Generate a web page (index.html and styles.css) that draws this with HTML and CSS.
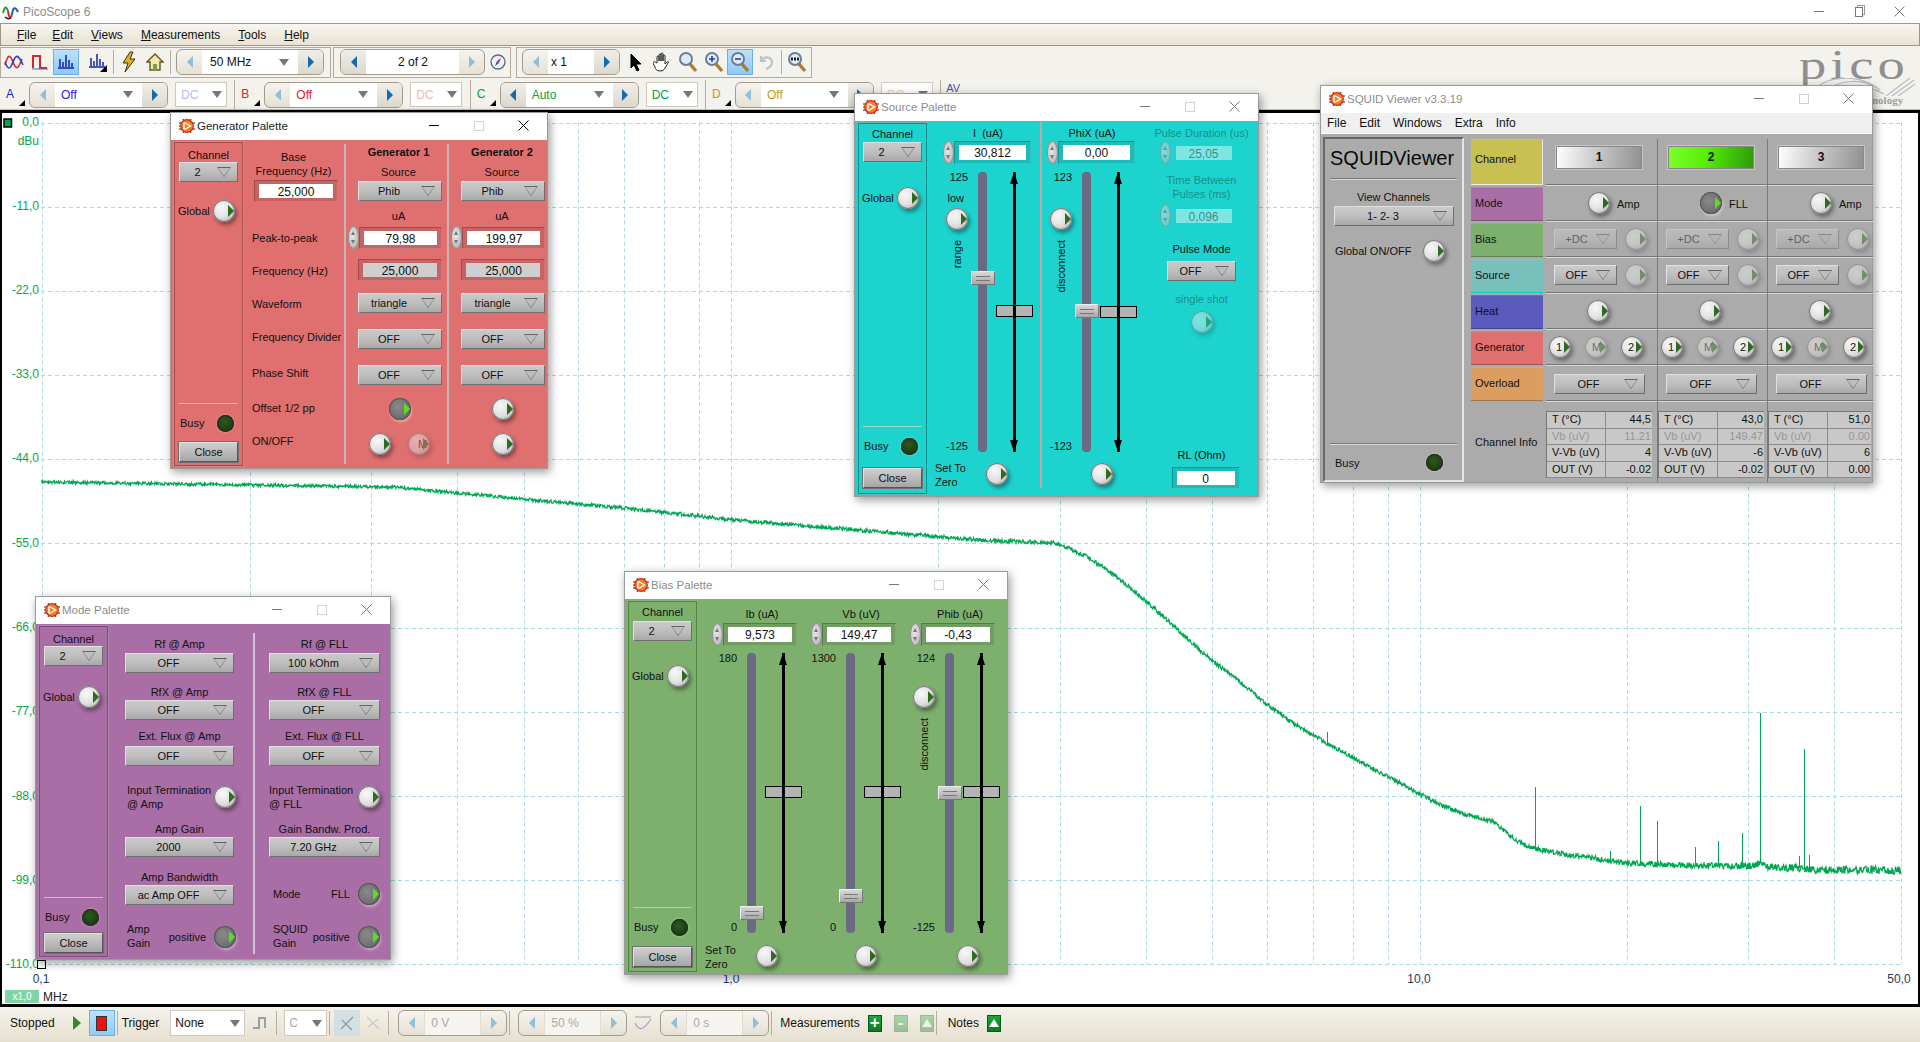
FILE: index.html
```html
<!DOCTYPE html>
<html lang="en">
<head>
    <meta charset="UTF-8">
    <title>PicoScope 6</title>
    <link rel="stylesheet" href="styles.css">
</head>
<body>
<svg class="defs" width="0" height="0">
    <symbol id="lv" viewBox="0 0 16 16">
        <path d="M0 5h3M0 8h3M0 11h3M13 5h3M13 11h3M4 1l1 2M12 1l-1 2M4 15l1-2M12 15l-1-2" stroke="#222" stroke-width="1"/>
        <circle cx="8" cy="8" r="6.3" fill="#f57f20" stroke="#d8261c" stroke-width="1.2"/>
        <path d="M5 4.5v7M5.5 4.5l6 3.5-6 3.5" fill="none" stroke="#fff" stroke-width="1.4"/>
    </symbol>
    <symbol id="x" viewBox="0 0 11 11">
        <path d="M.5.5l10 10M10.5.5l-10 10" stroke="currentColor" stroke-width="1" fill="none"/>
    </symbol>
    <symbol id="mag" viewBox="0 0 20 22">
        <path d="M12 13l6 7" stroke="#b07a30" stroke-width="3.4"/>
        <circle cx="8" cy="8" r="6" fill="#dcebf6" stroke="#6c7f92" stroke-width="2"/>
    </symbol>
</svg>

<header class="titlebar">
    <svg class="app-icon" width="17" height="16" viewBox="0 0 17 16">
        <path d="M1 9c2-7 3-7 5-2" stroke="#2a9a3a" stroke-width="2" fill="none"/>
        <path d="M6 7c1 7 2 8 4 4" stroke="#d8262c" stroke-width="2" fill="none"/>
        <path d="M10 11c1-8 3-9 6-3" stroke="#2a5ac0" stroke-width="2" fill="none"/>
        <path d="M3 13c2 2 4 2 6 1" stroke="#222" stroke-width="1.5" fill="none"/>
    </svg>
    <span class="app-title">PicoScope 6</span>
    <div class="title-btns">
        <span class="wb"><i class="wb-min"></i></span>
        <span class="wb"><i class="wb-restore"></i></span>
        <span class="wb"><svg width="11" height="11"><use href="#x"/></svg></span>
    </div>
</header>

<nav class="menubar">
    <span><u>F</u>ile</span>
    <span><u>E</u>dit</span>
    <span><u>V</u>iews</span>
    <span><u>M</u>easurements</span>
    <span><u>T</u>ools</span>
    <span><u>H</u>elp</span>
</nav>

<div class="toolbar tb-one">
    <div class="tb-group g1">
        <button class="tool"><svg width="20" height="18" viewBox="0 0 20 18"><path d="M1 12C4 1 6 1 9 9s5 8 9-3" stroke="#d8262c" stroke-width="1.6" fill="none"/><path d="M1 9c3 8 5 8 8 0s5-8 10 3" stroke="#2a40c8" stroke-width="1.6" fill="none"/></svg></button>
        <button class="tool"><svg width="18" height="18" viewBox="0 0 18 18"><path d="M2 15V3h7v12h7" stroke="#d8262c" stroke-width="2" fill="none"/><path d="M1 16h16" stroke="#3a70b0"/></svg></button>
        <button class="tool sel"><svg width="18" height="18" viewBox="0 0 18 18"><path d="M3 14V6M6 14V9M9 14V2M12 14V7M15 14V10M1 15h16" stroke="#1020b0" stroke-width="1.5"/></svg></button>
        <button class="tool tool-gap"><svg width="20" height="20" viewBox="0 0 20 20"><path d="M3 14V6M6 14V9M9 14V2M12 14V7M15 14V10M1 15h16" stroke="#1020b0" stroke-width="1.5"/><path d="M19 13v7h-7z"/></svg></button>
        <i class="tb-sep"></i>
        <button class="tool"><svg width="16" height="22" viewBox="0 0 16 22"><path d="M9 1L2 12h5l-3 9 10-13H9l3-7z" fill="#e0b020" stroke="#3a3010"/></svg></button>
        <button class="tool"><svg width="18" height="20" viewBox="0 0 18 20"><path d="M9 2L1 10h3v8h10v-8h3z" fill="#f4e8b0" stroke="#6a5020" stroke-width="1.4"/><path d="M7 12h4v6H7z" fill="#7aa040"/></svg></button>
        <i class="tb-sep"></i>
        <div class="spin-box sb-wide">
            <span class="arr"><i class="tri-l dim"></i></span>
            <span class="sb-field"><span class="sb-text">50 MHz</span><i class="combo-tri"></i></span>
            <span class="arr gray"><i class="tri-r"></i></span>
        </div>
    </div>
    <div class="tb-group g2">
        <div class="spin-box sb-page">
            <span class="arr gray"><i class="tri-l"></i></span>
            <span class="sb-field center"><span class="sb-text">2 of 2</span></span>
            <span class="arr"><i class="tri-r dim"></i></span>
        </div>
        <button class="tool"><svg width="16" height="16" viewBox="0 0 16 16"><circle cx="8" cy="8" r="7" fill="#eef3f8" stroke="#5a6a80" stroke-width="1.3"/><path d="M11 4L9 9 7 7z" fill="#d8262c"/><path d="M5 12l2-5 2 2z" fill="#2a50b0"/></svg></button>
    </div>
    <div class="tb-group g3">
        <div class="spin-box sb-zoom">
            <span class="arr"><i class="tri-l dim"></i></span>
            <span class="sb-field"><span class="sb-text">x 1</span></span>
            <span class="arr gray"><i class="tri-r"></i></span>
        </div>
        <button class="tool"><svg width="14" height="20" viewBox="0 0 14 20"><path d="M2 2v14l3-3 3 6 2-1-3-6h5z" stroke="#000"/></svg></button>
        <button class="tool"><svg width="18" height="20" viewBox="0 0 18 20"><path d="M4 11V5a1 1 0 012 0v4-6a1 1 0 012 0v6-7a1 1 0 012 0v7-5a1 1 0 012 0v8l2-2c1-1 2 0 1 1l-3 5c-1 2-2 3-5 3-3 0-5-2-5-4l-2-4c0-1 1-2 2-1z" fill="#fff" stroke="#111" stroke-width=".9"/></svg></button>
        <button class="tool"><svg width="20" height="22"><use href="#mag"/></svg></button>
        <button class="tool"><svg width="20" height="22" viewBox="0 0 20 22"><use href="#mag" width="20" height="22"/><path d="M5 8h6M8 5v6" stroke="#2040a0" stroke-width="1.6"/></svg></button>
        <button class="tool sel"><svg width="20" height="22" viewBox="0 0 20 22"><use href="#mag" width="20" height="22"/><path d="M5 8h6" stroke="#2040a0" stroke-width="1.6"/></svg></button>
        <button class="tool off"><svg width="18" height="18" viewBox="0 0 18 18"><path d="M4 8c3-5 10-5 11 1 0 4-3 6-6 7M4 3v5h5" stroke="#7a8a98" stroke-width="2.2" fill="none"/></svg></button>
        <i class="tb-sep"></i>
        <button class="tool"><svg width="20" height="22" viewBox="0 0 20 22"><use href="#mag" width="20" height="22"/><path d="M4 8h8" stroke="#222" stroke-width="3" stroke-dasharray="2 1"/></svg></button>
    </div>
</div>

<div class="toolbar tb-two">
    <div class="ch-group">
        <span class="ch-label c-a">A</span>
        <div class="spin-box sb-ch">
            <span class="arr"><i class="tri-l dim"></i></span>
            <span class="sb-field"><span class="sb-text c-a">Off</span><i class="combo-tri"></i></span>
            <span class="arr gray"><i class="tri-r"></i></span>
        </div>
        <div class="cpl off-a"><span>DC</span><i class="combo-tri"></i></div>
    </div>
    <div class="ch-group">
        <span class="ch-label c-b">B</span>
        <div class="spin-box sb-ch">
            <span class="arr"><i class="tri-l dim"></i></span>
            <span class="sb-field"><span class="sb-text c-b">Off</span><i class="combo-tri"></i></span>
            <span class="arr gray"><i class="tri-r"></i></span>
        </div>
        <div class="cpl off-b"><span>DC</span><i class="combo-tri"></i></div>
    </div>
    <div class="ch-group">
        <span class="ch-label c-c">C</span>
        <div class="spin-box sb-ch">
            <span class="arr gray"><i class="tri-l"></i></span>
            <span class="sb-field"><span class="sb-text c-c">Auto</span><i class="combo-tri"></i></span>
            <span class="arr gray"><i class="tri-r"></i></span>
        </div>
        <div class="cpl c-c"><span>DC</span><i class="combo-tri"></i></div>
    </div>
    <div class="ch-group">
        <span class="ch-label c-d">D</span>
        <div class="spin-box sb-ch">
            <span class="arr"><i class="tri-l dim"></i></span>
            <span class="sb-field"><span class="sb-text c-d">Off</span><i class="combo-tri"></i></span>
            <span class="arr gray"><i class="tri-r"></i></span>
        </div>
        <div class="cpl off-d"><span>DC</span><i class="combo-tri"></i></div>
    </div>
    <span class="ch-av">AV</span>
</div>

<div class="pico-logo">
    <span class="pico-word">pico</span>
    <svg class="pico-wave" width="101" height="18" viewBox="0 0 101 18">
        <path d="M0 12C15-4 45-2 60 8M8 16C25 0 50 0 66 12M20 18C36 6 52 6 70 16M72 18L96 0M78 18L100 2M84 18L101 6" stroke="#b4bcc6" stroke-width="1.2" fill="none"/>
    </svg>
    <span class="pico-sub">nology</span>
</div>

<main class="plot">
    <svg id="plotSvg" class="plot-svg" viewBox="0 110 1920 897">
        <g id="gridLines"></g>
        <g id="traceLayer"></g>
        <g class="ylabels">
            <text x="39" y="126">0,0</text>
            <text x="39" y="145">dBu</text>
            <text x="39" y="210">-11,0</text>
            <text x="39" y="294">-22,0</text>
            <text x="39" y="378">-33,0</text>
            <text x="39" y="462">-44,0</text>
            <text x="39" y="547">-55,0</text>
            <text x="39" y="631">-66,0</text>
            <text x="39" y="715">-77,0</text>
            <text x="39" y="800">-88,0</text>
            <text x="39" y="884">-99,0</text>
            <text x="39" y="968">-110,0</text>
        </g>
        <g class="xlabels">
            <text x="41" y="983">0,1</text>
            <text x="731" y="983">1,0</text>
            <text x="1419" y="983">10,0</text>
            <text x="1899" y="983">50,0</text>
        </g>
        <rect x="5" y="990" width="34" height="13" fill="#7fd4a8"/>
        <text class="xbadge" x="22" y="1000">x1,0</text>
        <text class="xunit" x="43" y="1001">MHz</text>
        <rect x="4" y="119" width="7.500" height="8" fill="#00a651" stroke="#000" stroke-width="1.500"/>
        <rect x="37.500" y="960.500" width="8" height="8" fill="#fff" stroke="#000"/>
    </svg>
</main>

<footer class="statusbar">
    <span class="st-text st-stopped">Stopped</span>
    <i class="st-play"></i>
    <button class="tool sel st-stop"><i></i></button>
    <i class="tb-sep"></i>
    <span class="st-text st-trigger">Trigger</span>
    <div class="st-combo st-none"><span>None</span><i class="combo-tri"></i></div>
    <svg class="st-edge" width="18" height="20" viewBox="0 0 18 20"><path d="M1 15h6V5h6v10" stroke="#9aa0a0" stroke-width="2" fill="none"/></svg>
    <i class="tb-sep"></i>
    <div class="st-combo st-c off"><span>C</span><i class="combo-tri"></i></div>
    <i class="tb-sep"></i>
    <button class="tool st-flat"><svg width="16" height="18" viewBox="0 0 16 18"><path d="M2 15L14 3M3 6l5 5 5 5" stroke="#8a9cb0" stroke-width="1.3" fill="none"/></svg></button>
    <button class="tool off"><svg width="16" height="18" viewBox="0 0 16 18"><path d="M2 3l12 12M3 13L13 5" stroke="#9aa6b0" stroke-width="1.3" fill="none"/></svg></button>
    <i class="tb-sep"></i>
    <div class="spin-box sb-st off st-first"><span class="arr"><i class="tri-l dim"></i></span><span class="sb-field"><span class="sb-text">0 V</span></span><span class="arr"><i class="tri-r dim"></i></span></div>
    <i class="tb-sep"></i>
    <div class="spin-box sb-st off"><span class="arr"><i class="tri-l dim"></i></span><span class="sb-field"><span class="sb-text">50 %</span></span><span class="arr"><i class="tri-r dim"></i></span></div>
    <svg class="st-edge2" width="18" height="20" viewBox="0 0 18 20"><path d="M1 4h16M1 10c4 8 8 8 16-4" stroke="#a49ac8" stroke-width="1.2" fill="none"/></svg>
    <div class="spin-box sb-st off"><span class="arr"><i class="tri-l dim"></i></span><span class="sb-field"><span class="sb-text">0 s</span></span><span class="arr"><i class="tri-r dim"></i></span></div>
    <i class="tb-sep"></i>
    <span class="st-text st-meas">Measurements</span>
    <span class="gbtn">+</span>
    <span class="gbtn off">-</span>
    <span class="gbtn off"><i class="gtri"></i></span>
    <i class="tb-sep"></i>
    <span class="st-text st-notes">Notes</span>
    <span class="gbtn"><i class="gtri"></i></span>
</footer>

<!-- generator palette -->
<section class="win win-gen active">
    <div class="win-title">
        <svg width="16" height="16"><use href="#lv"/></svg>
        <span>Generator Palette</span>
        <div class="title-btns"><span class="wb"><i class="wb-min"></i></span><span class="wb"><i class="wb-max"></i></span><span class="wb"><svg width="11" height="11"><use href="#x"/></svg></span></div>
    </div>
    <div class="win-body">
        <aside class="side">
            <div class="lbl">Channel</div>
            <div class="drop"><span>2</span></div>
            <div class="side-row global"><span class="lbl">Global</span><i class="ring"></i></div>
            <hr class="side-sep">
            <div class="side-row busy"><span class="lbl">Busy</span><i class="led"></i></div>
            <div class="close-btn">Close</div>
        </aside>
        <div class="gen-labels">
            <div class="lbl gen-base">Base<br>Frequency (Hz)</div>
            <div class="num gen-base-num"><b>25,000</b></div>
            <div class="lbl">Peak-to-peak</div>
            <div class="lbl">Frequency (Hz)</div>
            <div class="lbl">Waveform</div>
            <div class="lbl">Frequency Divider</div>
            <div class="lbl">Phase Shift</div>
            <div class="lbl">Offset 1/2 pp</div>
            <div class="lbl">ON/OFF</div>
        </div>
        <div class="gen-col">
            <div class="lbl bold">Generator 1</div>
            <div class="lbl">Source</div>
            <div class="drop"><span>Phib</span></div>
            <div class="lbl">uA</div>
            <div class="numrow"><i class="spin"></i><div class="num"><b>79,98</b></div></div>
            <div class="num gray"><b>25,000</b></div>
            <div class="drop"><span>triangle</span></div>
            <div class="drop"><span>OFF</span></div>
            <div class="drop"><span>OFF</span></div>
            <div class="gen-rings"><i class="ring lit"></i></div>
            <div class="gen-rings two"><i class="ring"></i><i class="ring dim txt">M</i></div>
        </div>
        <div class="gen-col">
            <div class="lbl bold">Generator 2</div>
            <div class="lbl">Source</div>
            <div class="drop"><span>Phib</span></div>
            <div class="lbl">uA</div>
            <div class="numrow"><i class="spin"></i><div class="num"><b>199,97</b></div></div>
            <div class="num gray"><b>25,000</b></div>
            <div class="drop"><span>triangle</span></div>
            <div class="drop"><span>OFF</span></div>
            <div class="drop"><span>OFF</span></div>
            <div class="gen-rings"><i class="ring"></i></div>
            <div class="gen-rings"><i class="ring"></i></div>
        </div>
    </div>
</section>

<!-- source palette -->
<section class="win win-src">
    <div class="win-title">
        <svg width="16" height="16"><use href="#lv"/></svg>
        <span>Source Palette</span>
        <div class="title-btns"><span class="wb"><i class="wb-min"></i></span><span class="wb"><i class="wb-max"></i></span><span class="wb"><svg width="11" height="11"><use href="#x"/></svg></span></div>
    </div>
    <div class="win-body">
        <aside class="side">
            <div class="lbl">Channel</div>
            <div class="drop"><span>2</span></div>
            <div class="side-row global"><span class="lbl">Global</span><i class="ring"></i></div>
            <hr class="side-sep">
            <div class="side-row busy"><span class="lbl">Busy</span><i class="led"></i></div>
            <div class="close-btn">Close</div>
        </aside>
        <div class="sl sl-first">
            <div class="lbl sl-head">I&nbsp; (uA)</div>
            <div class="numrow sl-num"><i class="spin"></i><div class="num"><b>30,812</b></div></div>
            <div class="sl-area">
                <div class="sl-labels">
                    <span class="lbl">125</span>
                    <span class="lbl sl-low">low</span>
                    <i class="ring sl-ring"></i>
                    <span class="lbl vert sl-vert">range</span>
                    <span class="lbl sl-end">-125</span>
                </div>
                <div class="sl-track"><i class="sl-thumb" style="top:99px"></i></div>
                <div class="sl-arrow"><i class="sl-mark" style="top:133px"></i></div>
            </div>
            <div class="sl-foot"><span class="lbl sl-zero">Set To<br>Zero</span><i class="ring"></i></div>
        </div>
        <div class="sl sl-narrow">
            <div class="lbl sl-head">PhiX (uA)</div>
            <div class="numrow sl-num"><i class="spin"></i><div class="num"><b>0,00</b></div></div>
            <div class="sl-area">
                <div class="sl-labels">
                    <span class="lbl">123</span>
                    <i class="ring sl-ring-far"></i>
                    <span class="lbl vert sl-vert">disconnect</span>
                    <span class="lbl sl-end">-123</span>
                </div>
                <div class="sl-track"><i class="sl-thumb" style="top:132px"></i></div>
                <div class="sl-arrow"><i class="sl-mark" style="top:134px"></i></div>
            </div>
            <div class="sl-foot"><i class="ring"></i></div>
        </div>
        <div class="pulse-col">
            <div class="lbl dim-text">Pulse Duration (us)</div>
            <div class="numrow faded"><i class="spin"></i><div class="num pale"><b>25,05</b></div></div>
            <div class="lbl dim-text">Time Between<br>Pulses (ms)</div>
            <div class="numrow faded"><i class="spin"></i><div class="num pale"><b>0,096</b></div></div>
            <div class="lbl">Pulse Mode</div>
            <div class="drop pulse-drop"><span>OFF</span></div>
            <div class="lbl dim-text">single shot</div>
            <i class="ring dim"></i>
            <div class="lbl">RL (Ohm)</div>
            <div class="num rl-num"><b>0</b></div>
        </div>
    </div>
</section>

<!-- squid viewer -->
<section class="win win-sq">
    <div class="win-title">
        <svg width="16" height="16"><use href="#lv"/></svg>
        <span>SQUID Viewer v3.3.19</span>
        <div class="title-btns"><span class="wb"><i class="wb-min"></i></span><span class="wb"><i class="wb-max"></i></span><span class="wb"><svg width="11" height="11"><use href="#x"/></svg></span></div>
    </div>
    <nav class="sq-menu"><span>File</span><span>Edit</span><span>Windows</span><span>Extra</span><span>Info</span></nav>
    <div class="sq-body">
        <aside class="sq-side">
            <h1 class="sq-name">SQUIDViewer</h1>
            <hr class="sq-sep">
            <div class="lbl sq-view">View Channels</div>
            <div class="drop sq-drop"><span>1- 2- 3</span></div>
            <div class="sq-row"><span class="lbl">Global ON/OFF</span><i class="ring"></i></div>
            <hr class="sq-sep sq-sep-low">
            <div class="sq-row sq-busy"><span class="lbl">Busy</span><i class="led"></i></div>
        </aside>
        <div class="sq-grid">
            <div class="tile t-chan">Channel</div>
            <div class="cell c-chan"><div class="chan-btn">1</div></div>
            <div class="cell c-chan"><div class="chan-btn green">2</div></div>
            <div class="cell c-chan"><div class="chan-btn">3</div></div>

            <div class="tile t-mode">Mode</div>
            <div class="cell c-mode"><i class="ring"></i><span class="lbl">Amp</span></div>
            <div class="cell c-mode"><i class="ring lit"></i><span class="lbl">FLL</span></div>
            <div class="cell c-mode"><i class="ring"></i><span class="lbl">Amp</span></div>

            <div class="tile t-bias">Bias</div>
            <div class="cell c-opt"><div class="drop faded"><span>+DC</span></div><i class="ring dim"></i></div>
            <div class="cell c-opt"><div class="drop faded"><span>+DC</span></div><i class="ring dim"></i></div>
            <div class="cell c-opt"><div class="drop faded"><span>+DC</span></div><i class="ring dim"></i></div>

            <div class="tile t-src">Source</div>
            <div class="cell c-opt"><div class="drop"><span>OFF</span></div><i class="ring dim"></i></div>
            <div class="cell c-opt"><div class="drop"><span>OFF</span></div><i class="ring dim"></i></div>
            <div class="cell c-opt"><div class="drop"><span>OFF</span></div><i class="ring dim"></i></div>

            <div class="tile t-heat">Heat</div>
            <div class="cell c-heat"><i class="ring"></i></div>
            <div class="cell c-heat"><i class="ring"></i></div>
            <div class="cell c-heat"><i class="ring"></i></div>

            <div class="tile t-gen">Generator</div>
            <div class="cell c-gen"><i class="ring txt">1</i><i class="ring dim txt">M</i><i class="ring txt">2</i></div>
            <div class="cell c-gen"><i class="ring txt">1</i><i class="ring dim txt">M</i><i class="ring txt">2</i></div>
            <div class="cell c-gen"><i class="ring txt">1</i><i class="ring dim txt">M</i><i class="ring txt">2</i></div>

            <div class="tile t-over">Overload</div>
            <div class="cell c-over"><div class="drop"><span>OFF</span></div></div>
            <div class="cell c-over"><div class="drop"><span>OFF</span></div></div>
            <div class="cell c-over"><div class="drop"><span>OFF</span></div></div>

            <div class="tile t-info">Channel Info</div>
            <div class="cell c-info">
                <table class="info">
                    <tr><td>T (°C)</td><td>44,5</td></tr>
                    <tr class="dim-row"><td>Vb (uV)</td><td>11.21</td></tr>
                    <tr><td>V-Vb (uV)</td><td>4</td></tr>
                    <tr><td>OUT (V)</td><td>-0.02</td></tr>
                </table>
            </div>
            <div class="cell c-info">
                <table class="info">
                    <tr><td>T (°C)</td><td>43,0</td></tr>
                    <tr class="dim-row"><td>Vb (uV)</td><td>149.47</td></tr>
                    <tr><td>V-Vb (uV)</td><td>-6</td></tr>
                    <tr><td>OUT (V)</td><td>-0.02</td></tr>
                </table>
            </div>
            <div class="cell c-info">
                <table class="info">
                    <tr><td>T (°C)</td><td>51,0</td></tr>
                    <tr class="dim-row"><td>Vb (uV)</td><td>0.00</td></tr>
                    <tr><td>V-Vb (uV)</td><td>6</td></tr>
                    <tr><td>OUT (V)</td><td>0.00</td></tr>
                </table>
            </div>
        </div>
    </div>
</section>

<!-- mode palette -->
<section class="win win-mode">
    <div class="win-title">
        <svg width="16" height="16"><use href="#lv"/></svg>
        <span>Mode Palette</span>
        <div class="title-btns"><span class="wb"><i class="wb-min"></i></span><span class="wb"><i class="wb-max"></i></span><span class="wb"><svg width="11" height="11"><use href="#x"/></svg></span></div>
    </div>
    <div class="win-body">
        <aside class="side">
            <div class="lbl">Channel</div>
            <div class="drop"><span>2</span></div>
            <div class="side-row global"><span class="lbl">Global</span><i class="ring"></i></div>
            <hr class="side-sep">
            <div class="side-row busy"><span class="lbl">Busy</span><i class="led"></i></div>
            <div class="close-btn">Close</div>
        </aside>
        <div class="mode-col mode-a">
            <div class="lbl">Rf @ Amp</div>
            <div class="drop"><span>OFF</span></div>
            <div class="lbl">RfX @ Amp</div>
            <div class="drop"><span>OFF</span></div>
            <div class="lbl">Ext. Flux @ Amp</div>
            <div class="drop"><span>OFF</span></div>
            <div class="mode-row"><span class="lbl">Input Termination<br>@ Amp</span><i class="ring"></i></div>
            <div class="lbl">Amp Gain</div>
            <div class="drop"><span>2000</span></div>
            <div class="lbl">Amp Bandwidth</div>
            <div class="drop"><span>ac Amp OFF</span></div>
            <div class="mode-row mode-foot"><span class="lbl">Amp<br>Gain</span><span class="lbl mode-pos">positive</span><i class="ring lit"></i></div>
        </div>
        <div class="mode-col mode-b">
            <div class="lbl">Rf @ FLL</div>
            <div class="drop"><span>100 kOhm</span></div>
            <div class="lbl">RfX @ FLL</div>
            <div class="drop"><span>OFF</span></div>
            <div class="lbl">Ext. Flux @ FLL</div>
            <div class="drop"><span>OFF</span></div>
            <div class="mode-row"><span class="lbl">Input Termination<br>@ FLL</span><i class="ring"></i></div>
            <div class="lbl">Gain Bandw. Prod.</div>
            <div class="drop"><span>7.20 GHz</span></div>
            <div class="mode-row mode-sw"><span class="lbl">Mode</span><span class="lbl mode-pos">FLL</span><i class="ring lit"></i></div>
            <div class="mode-row mode-foot"><span class="lbl">SQUID<br>Gain</span><span class="lbl mode-pos">positive</span><i class="ring lit"></i></div>
        </div>
    </div>
</section>

<!-- bias palette -->
<section class="win win-bias">
    <div class="win-title">
        <svg width="16" height="16"><use href="#lv"/></svg>
        <span>Bias Palette</span>
        <div class="title-btns"><span class="wb"><i class="wb-min"></i></span><span class="wb"><i class="wb-max"></i></span><span class="wb"><svg width="11" height="11"><use href="#x"/></svg></span></div>
    </div>
    <div class="win-body">
        <aside class="side">
            <div class="lbl">Channel</div>
            <div class="drop"><span>2</span></div>
            <div class="side-row global"><span class="lbl">Global</span><i class="ring"></i></div>
            <hr class="side-sep">
            <div class="side-row busy"><span class="lbl">Busy</span><i class="led"></i></div>
            <div class="close-btn">Close</div>
        </aside>
        <div class="sl">
            <div class="lbl sl-head">Ib (uA)</div>
            <div class="numrow sl-num"><i class="spin"></i><div class="num"><b>9,573</b></div></div>
            <div class="sl-area">
                <div class="sl-labels"><span class="lbl">180</span><span class="lbl sl-end">0</span></div>
                <div class="sl-track"><i class="sl-thumb" style="top:253px"></i></div>
                <div class="sl-arrow"><i class="sl-mark" style="top:133px"></i></div>
            </div>
            <div class="sl-foot"><span class="lbl sl-zero">Set To<br>Zero</span><i class="ring"></i></div>
        </div>
        <div class="sl">
            <div class="lbl sl-head">Vb (uV)</div>
            <div class="numrow sl-num"><i class="spin"></i><div class="num"><b>149,47</b></div></div>
            <div class="sl-area">
                <div class="sl-labels"><span class="lbl">1300</span><span class="lbl sl-end">0</span></div>
                <div class="sl-track"><i class="sl-thumb" style="top:236px"></i></div>
                <div class="sl-arrow"><i class="sl-mark" style="top:133px"></i></div>
            </div>
            <div class="sl-foot"><i class="ring"></i></div>
        </div>
        <div class="sl">
            <div class="lbl sl-head">Phib (uA)</div>
            <div class="numrow sl-num"><i class="spin"></i><div class="num"><b>-0,43</b></div></div>
            <div class="sl-area">
                <div class="sl-labels">
                    <span class="lbl">124</span>
                    <i class="ring sl-ring-mid"></i>
                    <span class="lbl vert sl-vert">disconnect</span>
                    <span class="lbl sl-end">-125</span>
                </div>
                <div class="sl-track"><i class="sl-thumb" style="top:133px"></i></div>
                <div class="sl-arrow"><i class="sl-mark" style="top:133px"></i></div>
            </div>
            <div class="sl-foot sl-foot-far"><i class="ring"></i></div>
        </div>
    </div>
</section>

<script src="script.js"></script>
</body>
</html>
```

FILE: styles.css
```css
* {
    box-sizing: border-box;
}
body {
    margin: 0;
    width: 1920px;
    height: 1042px;
    overflow: hidden;
    display: flex;
    flex-direction: column;
    position: relative;
    background: #fff;
    font-family: "Liberation Sans", Arial, sans-serif;
    font-size: 12px;
    color: #111;
}
.defs {
    position: absolute;
}
button {
    font: inherit;
    padding: 0;
    border: none;
    background: none;
}
i {
    font-style: normal;
}

/* main window chrome */
.titlebar {
    height: 23px;
    flex: none;
    display: flex;
    align-items: center;
    padding-left: 2px;
    background: #fff;
}
.app-title {
    margin-left: 4px;
    color: #8c8c8c;
}
.title-btns {
    margin-left: auto;
    margin-right: 1px;
    display: flex;
}
.wb {
    width: 45px;
    height: 20px;
    display: flex;
    align-items: center;
    justify-content: center;
    color: #777;
}
.wb-min {
    width: 10px;
    height: 1px;
    background: currentColor;
}
.wb-max {
    width: 10px;
    height: 10px;
    border: 1px solid #d2d2d2;
}
.wb-restore {
    width: 8px;
    height: 10px;
    border: 1px solid currentColor;
    box-shadow: 2px -2px 0 -1px #fff, 2px -2px 0 0 #999;
}
.titlebar .wb {
    width: 40px;
}
.menubar {
    height: 23px;
    flex: none;
    display: flex;
    align-items: center;
    padding-left: 16px;
    gap: 15px;
    border: 1px solid #a09686;
    background: linear-gradient(#f8f6f0, #e8e2d2);
}
.menubar u {
    text-underline-offset: 1px;
}
.menubar span:nth-child(2) {
    margin-left: 1px;
}
.menubar span:nth-child(3) {
    margin-left: 3px;
}
.menubar span:nth-child(4) {
    margin-left: 3px;
}
.menubar span:nth-child(5),
.menubar span:nth-child(6) {
    margin-left: 3px;
}

/* toolbars */
.toolbar {
    flex: none;
    display: flex;
    background: #f4f2ed;
}
.tb-one {
    height: 33px;
    padding-top: 1px;
    gap: 2px;
}
.tb-two {
    height: 31px;
    border-top: 1px solid #f4f2ed;
    border-bottom: 1px solid #c9c0ae;
}
.tb-group {
    height: 31px;
    display: flex;
    align-items: center;
    border: 1px solid #b3aa9b;
    padding-bottom: 1px;
}
.g1 {
    width: 331px;
}
.g2 {
    width: 178px;
    padding-left: 6px;
}
.g3 {
    width: 296px;
    margin-left: 3px;
    padding-left: 5px;
}
.tool {
    width: 26px;
    height: 26px;
    flex: none;
    display: flex;
    align-items: center;
    justify-content: center;
}
.tool.sel {
    background: linear-gradient(#bfe2fb, #8ccaf6);
    outline: 1px solid #6cb0e4;
    outline-offset: -1px;
}
.tool.off {
    opacity: 0.45;
}
.tool-gap {
    margin-left: 6px;
}
.tb-sep {
    width: 1px;
    height: 24px;
    flex: none;
    margin: 0 2px;
    background: #b5ac9c;
}
.spin-box {
    height: 26px;
    flex: none;
    display: flex;
    border: 1px solid #a59b8b;
    border-radius: 6px;
    background: linear-gradient(#f5f3ee, #e6e1d5);
    overflow: hidden;
}
.spin-box .arr {
    width: 25px;
    flex: none;
    display: flex;
    align-items: center;
    justify-content: center;
}
.sb-field {
    flex: 1;
    display: flex;
    align-items: center;
    padding: 0 5px 0 6px;
    background: #fff;
}
.sb-field.center {
    justify-content: center;
}
.combo-tri {
    width: 0;
    height: 0;
    margin-left: auto;
    margin-right: 4px;
    border-top: 7px solid #777;
    border-left: 5px solid transparent;
    border-right: 5px solid transparent;
}
.tri-l,
.tri-r {
    width: 0;
    height: 0;
    border-top: 6px solid transparent;
    border-bottom: 6px solid transparent;
}
.tri-l {
    border-right: 6px solid #0f6cb0;
}
.tri-r {
    border-left: 6px solid #0f6cb0;
}
.tri-l.dim {
    border-right-color: #8fbedb;
}
.tri-r.dim {
    border-left-color: #8fbedb;
}
.arr.gray {
    background: linear-gradient(#f0eee9, #dcd8cd);
}
.sb-wide {
    width: 148px;
    margin-left: 3px;
}
.sb-wide .sb-field {
    padding-left: 8px;
}
.sb-page {
    width: 145px;
}
.sb-zoom {
    width: 98px;
    margin-right: 3px;
}
.sb-zoom .sb-field {
    padding-left: 3px;
}
.ch-group {
    width: 235.33px;
    height: 29px;
    display: flex;
    align-items: center;
    padding-left: 6px;
    border-right: 1px solid #b5ac9c;
}
.ch-label {
    width: 23px;
    height: 24px;
    flex: none;
    line-height: 22px;
    position: relative;
}
.ch-label::after {
    content: "";
    position: absolute;
    right: 4px;
    bottom: 1px;
    border-left: 6px solid transparent;
    border-bottom: 6px solid #000;
}
.sb-ch {
    width: 139px;
    height: 26px;
}
.cpl {
    width: 52px;
    height: 25px;
    flex: none;
    margin-left: 7px;
    display: flex;
    align-items: center;
    padding-left: 5px;
    background: #fff;
    border: 1px solid #cfc9bd;
}
.c-a {
    color: #2020e0;
}
.c-b {
    color: #e02020;
}
.c-c {
    color: #00a040;
}
.c-d {
    color: #c09a20;
}
.off-a {
    color: #b8b8ee;
}
.off-b {
    color: #eeb8b8;
}
.off-d {
    color: #e6d8a8;
}
.ch-av {
    margin-left: 5px;
    margin-top: 2px;
    color: #5050a0;
    font-size: 11px;
}

/* logo */
.pico-logo {
    position: absolute;
    left: 1799px;
    top: 42px;
    width: 121px;
    height: 66px;
}
.pico-word {
    display: block;
    width: 84px;
    font-family: "Liberation Serif", serif;
    font-size: 42px;
    line-height: 47px;
    letter-spacing: 3px;
    color: #8f8f8f;
    transform: scaleX(1.3);
    transform-origin: left top;
}
.pico-wave {
    position: absolute;
    left: 15px;
    top: 36px;
}
.pico-sub {
    position: absolute;
    left: 73px;
    top: 52px;
    font-family: "Liberation Serif", serif;
    font-size: 11px;
    font-weight: bold;
    color: #a0a0a0;
}

/* plot */
.plot {
    flex: 1;
    min-height: 0;
    border: 2px solid #000;
    border-top-width: 3px;
    border-bottom-width: 3px;
}
.plot-svg {
    position: absolute;
    left: 0;
    top: 110px;
    width: 1920px;
    height: 897px;
}
.ylabels text {
    font-size: 12px;
    fill: #00a651;
    text-anchor: end;
}
.xlabels text {
    font-size: 12px;
    fill: #1c3a62;
    text-anchor: middle;
}
.xbadge {
    font-size: 10px;
    fill: #fff;
    text-anchor: middle;
}
.xunit {
    font-size: 12px;
    fill: #222;
}

/* status bar */
.statusbar {
    height: 35px;
    flex: none;
    display: flex;
    align-items: center;
    padding-bottom: 3px;
    background: linear-gradient(#f5f2ec, #e6e0cf);
}
.st-text {
    flex: none;
}
.st-stopped {
    margin-left: 10px;
}
.st-play {
    margin-left: 18px;
    width: 0;
    height: 0;
    border-left: 8px solid #2d8a2d;
    border-top: 7px solid transparent;
    border-bottom: 7px solid transparent;
}
.st-stop {
    margin-left: 8px;
}
.st-stop i {
    width: 11px;
    height: 15px;
    background: #f01010;
    border: 1px solid #333;
}
.st-trigger {
    margin-left: 2px;
}
.st-combo {
    height: 26px;
    flex: none;
    display: flex;
    align-items: center;
    padding-left: 4px;
    background: #fff;
    border: 1px solid #cfc9bd;
}
.st-combo.off {
    color: #aaa;
}
.st-none {
    width: 75px;
    margin-left: 11px;
}
.st-c {
    width: 43px;
    margin-left: 5px;
}
.st-edge {
    margin: 0 4px 0 7px;
}
.st-flat {
    background: #d4dfe4;
    margin-left: 2px;
}
.sb-st {
    width: 109px;
    margin-left: 6px;
}
.st-first {
    margin-left: 7px;
}
.st-edge2 + .sb-st {
    margin-left: 1px;
}
.sb-st.off .sb-text {
    color: #aaa;
}
.sb-st.off .sb-field {
    background: #f6f4ef;
    border-left: 1px solid #e0dccf;
    border-right: 1px solid #e0dccf;
}
.st-edge2 {
    margin: 0 7px;
}
.st-meas {
    margin-left: 6px;
}
.gbtn {
    width: 14px;
    height: 17px;
    margin-left: 8px;
    flex: none;
    display: flex;
    align-items: center;
    justify-content: center;
    color: #fff;
    font-size: 17px;
    font-weight: bold;
    background: linear-gradient(#18a83a, #0c7a24);
    border: 1px solid #0a5a1a;
}
.gbtn.off {
    opacity: 0.35;
    margin-left: 12px;
}
.gtri {
    width: 0;
    height: 0;
    border-left: 5px solid transparent;
    border-right: 5px solid transparent;
    border-bottom: 8px solid #fff;
}
.st-notes {
    margin-left: 9px;
}
.statusbar .tb-sep + .st-notes + .gbtn {
    margin-left: 8px;
}

/* palette windows */
.win {
    position: absolute;
    display: flex;
    flex-direction: column;
    border: 1px solid #9a9a9a;
    background: var(--pal);
    box-shadow: 2px 3px 9px rgba(0, 0, 0, 0.4);
}
.win-gen {
    left: 170px;
    top: 112px;
    width: 378px;
    height: 357px;
    --pal: #e06f6f;
    --edge: #a84c4c;
}
.win-src {
    left: 854px;
    top: 93px;
    width: 405px;
    height: 404px;
    --pal: #1dd3ce;
    --edge: #0e8f8c;
}
.win-mode {
    left: 35px;
    top: 596px;
    width: 356px;
    height: 364px;
    --pal: #a96ea6;
    --edge: #7c4a7a;
}
.win-bias {
    left: 624px;
    top: 571px;
    width: 384px;
    height: 404px;
    --pal: #7db06d;
    --edge: #4f8342;
}
.win-sq {
    left: 1320px;
    top: 85px;
    width: 553px;
    height: 398px;
    --pal: #ababab;
}
.win-title {
    height: 27px;
    flex: none;
    display: flex;
    align-items: center;
    padding: 0 0 2px 8px;
    background: #fff;
    color: #8c8c8c;
    font-size: 11.5px;
}
.win-title > span {
    margin-left: 2px;
}
.active .win-title {
    color: #222;
}
.active .wb {
    color: #000;
}
.win-body {
    flex: 1;
    min-height: 0;
    display: flex;
}
.lbl {
    font-size: 11px;
    line-height: 14px;
    color: #111;
}
.bold {
    font-weight: bold;
}
.dim-text {
    color: rgba(20, 70, 70, 0.5);
}
.vert {
    writing-mode: vertical-rl;
    transform: rotate(180deg);
}

/* left strip on each palette */
.side {
    width: 71px;
    flex: none;
    margin: 1px 0 1px 2px;
    padding: 5px 4px 3px 4px;
    display: flex;
    flex-direction: column;
    border: 2px solid var(--edge);
    outline: 1px solid rgba(255, 255, 255, 0.35);
    outline-offset: -1px;
}
.side > .lbl {
    text-align: center;
}
.side .drop {
    flex: none;
}
.side-row {
    display: flex;
    align-items: center;
    justify-content: space-between;
}
.global {
    margin-top: var(--glob);
    margin-bottom: auto;
    margin-left: -1px;
    padding-right: 3px;
}
.busy {
    margin-top: 10px;
    margin-bottom: var(--busy);
    height: 18px;
    padding: 0 4px 0 1px;
}
.win-gen .side {
    --glob: 18px;
    --busy: 10px;
}
.win-src .side {
    --glob: 25px;
    --busy: 13px;
    padding-top: 3px;
    padding-bottom: 5px;
}
.win-src .side .drop {
    margin-top: 1px;
}
.win-mode .side {
    --glob: 20px;
    --busy: 7px;
}
.win-bias .side {
    --glob: 24px;
    --busy: 11px;
    padding-top: 3px;
    padding-bottom: 4px;
}
.win-bias .side .drop {
    margin-top: 2px;
}
.side-sep {
    width: 100%;
    height: 1px;
    margin: 0;
    border: none;
    background: #d9d9c8;
    opacity: 0.7;
}
.close-btn {
    height: 20px;
    flex: none;
    text-align: center;
    font-size: 11px;
    line-height: 18px;
    background: linear-gradient(#cfcfcf, #a6a6a6);
    border: 1px solid #555;
    border-top-color: #dedede;
    border-left-color: #dedede;
    box-shadow: 0 0 0 1px #707070;
}

/* controls */
.drop {
    height: 20px;
    display: flex;
    align-items: center;
    justify-content: center;
    position: relative;
    padding-right: 22px;
    font-size: 11px;
    background: linear-gradient(#cacaca 0%, #bdbdbd 55%, #a8a8a8 100%);
    border: 1px solid;
    border-color: #e0e0e0 #6e6e6e #6e6e6e #e0e0e0;
}
.drop::after,
.drop::before {
    content: "";
    position: absolute;
    right: 6px;
    top: 4px;
    width: 0;
    height: 0;
    border-top: 10px solid #666;
    border-left: 7px solid transparent;
    border-right: 7px solid transparent;
}
.drop::before {
    z-index: 1;
    right: 7px;
    top: 5px;
    border-top: 8px solid #bdbdbd;
    border-left-width: 6px;
    border-right-width: 6px;
}
.drop.faded,
.numrow.faded .spin {
    opacity: 0.5;
}
.ring {
    display: block;
    width: 22px;
    height: 22px;
    flex: none;
    position: relative;
    border-radius: 50%;
    background: radial-gradient(circle at 38% 35%, #f8f8f8 0, #e0e0e0 50%, #a0a0a0 100%);
    box-shadow: inset 0 0 0 1px #7a7a7a, 2px 3px 4px rgba(0, 0, 0, 0.4);
}
.ring::after {
    content: "";
    position: absolute;
    right: 1px;
    top: 5px;
    width: 0;
    height: 0;
    border-left: 6px solid #2e6a20;
    border-top: 6px solid transparent;
    border-bottom: 6px solid transparent;
}
.ring.lit {
    background: radial-gradient(circle at 40% 40%, #8a8a8a, #5e5e5e);
    box-shadow: inset 0 0 0 1px #555, 1px 2px 3px rgba(255, 255, 255, 0.4);
}
.ring.lit::after {
    border-left-color: #58e020;
}
.ring.dim {
    opacity: 0.45;
}
.ring.txt {
    font-size: 11px;
    line-height: 22px;
    padding-left: 7px;
}
.led {
    width: 17px;
    height: 17px;
    flex: none;
    border-radius: 50%;
    background: radial-gradient(circle at 45% 40%, #2e5a1e, #0e2c0a);
    box-shadow: inset 0 0 0 1px #2a2a2a, 0 0 3px rgba(255, 255, 255, 0.4);
}
.num {
    height: 22px;
    display: flex;
    padding: 3px 4px;
    border: 1px solid;
    border-color: rgba(0, 0, 0, 0.22) rgba(255, 255, 255, 0.12) rgba(255, 255, 255, 0.12) rgba(0, 0, 0, 0.22);
    background: rgba(0, 0, 0, 0.1);
}
.num b {
    flex: 1;
    font-weight: normal;
    font-size: 12px;
    line-height: 16px;
    text-align: center;
    background: #fff;
}
.num.gray b {
    background: #cfcfcf;
}
.num.pale {
    background: none;
    border-color: transparent;
}
.num.pale b {
    background: #7de6e2;
    color: rgba(0, 60, 60, 0.55);
}
.numrow {
    display: flex;
    align-items: center;
}
.spin {
    width: 11px;
    height: 23px;
    flex: none;
    position: relative;
    border-radius: 50%;
    background: radial-gradient(ellipse at 40% 40%, #e8e8e8, #a6a6a6);
    box-shadow: inset 0 0 0 1px #8a8a8a;
}
.spin::before,
.spin::after {
    content: "";
    position: absolute;
    left: 3px;
    border-left: 2.5px solid transparent;
    border-right: 2.5px solid transparent;
}
.spin::before {
    top: 5px;
    border-bottom: 4px solid #777;
}
.spin::after {
    bottom: 5px;
    border-top: 4px solid #777;
}

/* generator palette */
.gen-labels {
    width: 100px;
    flex: none;
    padding: 10px 0 0 8px;
    display: grid;
    grid-template-columns: 1fr;
    grid-template-rows: 30px 51px 33px 33px 33px 36px 35px 33px 14px;
    align-content: start;
}
.gen-base {
    text-align: center;
    margin-left: -3px;
    margin-right: 6px;
}
.gen-base-num {
    width: 84px;
    margin-left: 2px;
}
.gen-col {
    margin-top: 4px;
    height: 320px;
    display: grid;
    grid-template-columns: 84px;
    grid-template-rows: 20px 16px 28px 17px 33px 34px 36px 36px 33px 35px 22px;
    align-content: start;
    align-items: start;
    padding-top: 1px;
    text-align: center;
    border-left: 2px solid #c6b5b5;
}
.gen-col:nth-child(3) {
    width: 104px;
    padding-left: 12px;
}
.gen-col:nth-child(4) {
    width: 100px;
    padding-left: 12px;
}
.gen-col > .lbl {
    margin-left: -3px;
}
.gen-col .numrow .spin {
    margin-left: -10px;
}
.gen-col .numrow .num {
    flex: 1;
}
.gen-rings {
    display: flex;
    justify-content: center;
    margin-left: -1px;
}
.gen-rings.two {
    gap: 17px;
}

/* sliders, shared by source and bias */
.sl {
    --lw: 39px;
    width: 99px;
    flex: none;
    padding-top: 8px;
}
.win-src .sl {
    --lw: 40px;
    padding-top: 5px;
}
.sl-first {
    width: 114px;
    border-right: 2px solid #c4a6a0;
    margin-bottom: 8px;
}
.sl-narrow {
    --lw: 30px !important;
    width: 103px;
}
.sl-head {
    margin-left: calc(var(--lw) - 25px);
    width: 100px;
    text-align: center;
}
.win-src .sl-head {
    width: 90px;
}
.sl-num {
    margin-left: calc(var(--lw) - 25px);
    margin-top: 1px;
}
.win-bias .sl-num {
    margin-top: 2px;
}
.sl-num .num {
    width: 77px;
    height: 23px;
}
.sl-area {
    display: flex;
    margin-top: 6px;
    height: 283px;
}
.win-bias .sl-area {
    margin-top: 5px;
}
.sl-labels {
    width: var(--lw);
    flex: none;
    display: flex;
    flex-direction: column;
    align-items: flex-end;
}
.sl-low {
    margin-top: 7px;
    margin-right: 4px;
}
.sl-ring {
    margin-top: 3px;
}
.sl-ring-far {
    margin-top: 24px;
}
.sl-ring-mid {
    margin-top: 21px;
}
.sl-vert {
    margin-top: 10px;
    margin-right: 4px;
}
.sl-end {
    margin-top: auto;
    margin-bottom: 0;
}
.sl-track {
    width: 9px;
    height: 280px;
    flex: none;
    position: relative;
    margin: 2px 0 0 10px;
    border-radius: 4px;
    background: #6a6a82;
}
.sl-thumb {
    position: absolute;
    left: -7px;
    width: 24px;
    height: 14px;
    background: linear-gradient(#d8d8d8, #a8a8a8);
    border: 1px solid;
    border-color: #eee #777 #777 #eee;
}
.sl-thumb::after {
    content: "";
    position: absolute;
    left: 4px;
    right: 4px;
    top: 4px;
    height: 3px;
    border-top: 1px solid #777;
    border-bottom: 1px solid #777;
}
.sl-arrow {
    width: 3px;
    height: 280px;
    flex: none;
    position: relative;
    margin: 2px 0 0 26px;
}
.sl-arrow::before,
.sl-arrow::after {
    content: "";
    position: absolute;
    left: -3px;
    z-index: 1;
    border-left: 4.500px solid transparent;
    border-right: 4.500px solid transparent;
}
.sl-arrow::before {
    top: 0;
    border-bottom: 12px solid #000;
}
.sl-arrow::after {
    bottom: 0;
    border-top: 12px solid #000;
}
.sl-arrow {
    background: linear-gradient(#000, #000) center / 3px 100% no-repeat;
}
.sl-mark {
    position: absolute;
    left: -17px;
    width: 37px;
    height: 12px;
    border: 1px solid #000;
    background: linear-gradient(90deg, #b4b4b4 0 47%, #000 47% 53%, #b4b4b4 53%);
}
.sl-foot {
    display: flex;
    justify-content: flex-end;
    width: 80px;
    margin-top: 10px;
}
.win-bias .sl-foot {
    margin-top: 11px;
}
.sl-narrow .sl-foot {
    width: 71px;
}
.win-bias .sl-foot-far {
    width: 83px;
}
.sl-zero {
    margin-right: auto;
    padding-left: 7px;
    margin-top: -2px;
}

/* pulse column on source palette */
.pulse-col {
    flex: 1;
    padding-top: 5px;
    display: grid;
    grid-template-columns: 1fr;
    justify-items: center;
    align-items: start;
    grid-template-rows: 15px 32px 31px 38px 19px 31px 19px 137px 19px 22px;
    align-content: start;
    text-align: center;
}
.pulse-drop {
    width: 69px;
}
.pulse-col .num.pale {
    width: 66px;
}
.pulse-col .numrow {
    margin-left: -7px;
}
.rl-num {
    width: 68px;
    margin-left: 8px;
}

/* mode palette */
.mode-col {
    display: grid;
    grid-template-columns: 109px;
    align-content: start;
    text-align: center;
}
.mode-a {
    width: 145px;
    padding: 13px 0 0 16px;
    grid-template-rows: 16px 32px 15px 29px 17px 37px 39px 15px 33px 15px 37px 30px;
}
.mode-b {
    width: 138px;
    margin-top: 9px;
    height: 321px;
    padding: 4px 0 0 14px;
    grid-template-columns: 111px;
    grid-template-rows: 16px 32px 15px 29px 17px 37px 39px 15px 43px 42px 30px;
    border-left: 2px solid #d0c4ce;
}
.mode-row {
    display: flex;
    align-items: center;
    justify-content: space-between;
    text-align: left;
    height: 28px;
    padding-left: 2px;
}
.mode-a .mode-row {
    width: 111px;
}
.mode-b .mode-row {
    padding-left: 0;
    width: 111px;
}
.mode-sw,
.mode-b .mode-foot {
    padding-left: 4px !important;
}
.mode-pos {
    margin-left: auto;
    margin-right: 8px;
}
.mode-foot .mode-pos,
.mode-foot .ring {
    position: relative;
    top: 1px;
}

/* squid viewer */
.sq-menu {
    height: 21px;
    flex: none;
    display: flex;
    align-items: center;
    padding: 0 0 1px 6px;
    background: #f0f0f0;
    border-bottom: 1px solid #fff;
    font-size: 12px;
}
.sq-menu span {
    margin-right: 13px;
}
.sq-body {
    flex: 1;
    display: flex;
    min-height: 0;
}
.sq-side {
    width: 141px;
    flex: none;
    margin: 3px 0 0 2px;
    padding: 0 5px;
    display: flex;
    flex-direction: column;
    border: 2px solid;
    border-color: #666 #e4e4e4 #e4e4e4 #666;
}
.sq-name {
    margin: 7px 0 0 0;
    font-size: 20px;
    line-height: 24px;
    font-weight: normal;
    color: #0a0a0a;
}
.sq-sep {
    width: 100%;
    height: 2px;
    margin: 8px 0 0;
    border: none;
    border-top: 1px solid #7a7a7a;
    border-bottom: 1px solid #d8d8d8;
}
.sq-view {
    margin-top: 10px;
    text-align: center;
}
.sq-drop {
    width: 120px;
    margin: 2px 0 0 4px;
}
.sq-row {
    display: flex;
    align-items: center;
    justify-content: space-between;
    margin: 14px 12px 0 5px;
}
.sq-sep-low {
    margin-top: auto;
}
.sq-busy {
    height: 17px;
    margin: 9px 14px 9px 5px;
}
.sq-grid {
    width: 405px;
    margin-left: 7px;
    padding-top: 5px;
    display: grid;
    grid-template-columns: 75px 111px 110px 106px;
    grid-template-rows: 46px repeat(6, 36px) 81px;
}
.tile {
    margin: 2px 3px 0 0;
    padding-left: 4px;
    font-size: 11px;
    line-height: 30px;
    border-bottom: 1px solid rgba(0, 0, 0, 0.25);
    border-top: 1px solid rgba(255, 255, 255, 0.1);
}
.t-chan {
    margin-top: 0;
    background: #c8c050;
    line-height: 38px;
    border-bottom-color: #eee;
    border-right: 1px solid #e8e8e8;
}
.t-mode {
    background: #a96ea6;
}
.t-bias {
    background: #7db06d;
}
.t-src {
    background: #78c0bc;
    border-bottom: 1px solid #00d0c8;
}
.t-heat {
    background: #5b5bbd;
}
.t-gen {
    background: #e06f6f;
}
.t-over {
    background: #dc9e60;
}
.t-info {
    line-height: 78px;
    border: none;
}
.cell {
    display: flex;
    align-items: center;
    align-content: flex-start;
    height: 100%;
    padding-top: 7px;
    border-bottom: 1px solid #787878;
    box-shadow: 0 1px 0 #d8d8d8;
}
.cell > * {
    margin-bottom: auto;
}
.c-chan {
    padding-left: 10px;
}
.chan-btn {
    width: 86px;
    height: 23px;
    text-align: center;
    font-size: 12px;
    font-weight: bold;
    line-height: 21px;
    background: linear-gradient(100deg, #fff 0%, #d0d0d0 40%, #909090 100%);
    border: 1px solid #888;
    box-shadow: 0 0 0 1px #c6c6c6;
}
.chan-btn.green {
    background: linear-gradient(100deg, #7cff2a 0%, #55ee05 45%, #2d9a08 100%);
}
.c-mode {
    padding-left: 42px;
    gap: 7px;
}
.c-mode .lbl {
    margin-top: 5px;
}
.c-opt {
    padding-left: 8px;
    gap: 8px;
}
.c-opt .drop {
    width: 63px;
    margin-top: 1px;
    padding-right: 18px;
}
.c-heat {
    padding-left: 41px;
}
.c-gen {
    padding-left: 3px;
    gap: 14px;
}
.c-over {
    padding-left: 8px;
}
.c-over .drop {
    width: 91px;
    margin-top: 2px;
}
.cell:nth-child(4n+3),
.cell:nth-child(4n) {
    border-left: 1px solid #7a7a7a;
}
.c-info {
    padding: 10px 2px 0 1px;
    border-bottom: none;
    box-shadow: none;
}
.info {
    width: 105px;
    border-collapse: collapse;
    font-size: 11px;
    background: #c8c8c8;
    border-top: 1px solid #777;
    box-shadow: -1px 0 0 #777;
}
.info td {
    height: 16.500px;
    padding: 0 1px 0 5px;
    border-bottom: 1px solid #8a8a8a;
    line-height: 13px;
    white-space: nowrap;
}
.info td:first-child {
    width: 58px;
    border-right: 1px solid #8a8a8a;
}
.info td:last-child {
    text-align: right;
}
.dim-row td {
    color: #969696;
}
```

FILE: script.js
```js
// draws the grid and the spectrum trace into the plot svg
const ns = 'http://www.w3.org/2000/svg';
const xOf = f => 731 + 688.6 * Math.log10(f);
const top0 = 122.5;
const bottom0 = 964.3;

function line(parent, x1, y1, x2, y2, attrs) {
    const el = document.createElementNS(ns, 'line');
    el.setAttribute('x1', x1);
    el.setAttribute('y1', y1);
    el.setAttribute('x2', x2);
    el.setAttribute('y2', y2);
    for (const k in attrs) el.setAttribute(k, attrs[k]);
    parent.appendChild(el);
}

const grid = document.getElementById('gridLines');
const gridStyle = { stroke: '#a8dbe6', 'stroke-width': 1, 'stroke-dasharray': '4 3' };
for (let i = 0; i <= 10; i++) {
    const y = Math.round(top0 + (bottom0 - top0) * i / 10) + 0.5;
    line(grid, 41, y, 1901, y, gridStyle);
}
const freqs = [0.1, 0.2, 0.3, 0.4, 0.5, 0.6, 0.7, 0.8, 0.9, 1, 2, 3, 4, 5, 6, 7, 8, 9, 10, 20, 30, 40, 50];
freqs.forEach(f => {
    const x = Math.round(xOf(f)) + 0.5;
    line(grid, x, top0, x, bottom0, gridStyle);
});

// shape of the curve in page pixels
const shape = [
    [41, 482], [392, 487], [490, 496], [624, 508], [735, 520], [857, 530], [980, 540],
    [1053, 543], [1059, 544], [1088, 557], [1117, 577], [1147, 602], [1176, 628], [1205, 655],
    [1235, 678], [1264, 702], [1293, 723], [1323, 741], [1352, 757], [1381, 773], [1411, 789],
    [1440, 805], [1469, 816], [1493, 821], [1511, 837], [1528, 847], [1557, 853], [1587, 857],
    [1616, 862], [1646, 864], [1704, 866], [1754, 866], [1760, 862], [1769, 867], [1798, 868],
    [1813, 870], [1901, 870]
];
const spikes = [
    [1327, 732], [1535, 787], [1610, 851], [1640, 806], [1657, 821], [1695, 847],
    [1718, 841], [1742, 833], [1760, 713], [1804, 749], [1799, 856], [1809, 855]
];

function baseY(x) {
    for (let i = 1; i < shape.length; i++) {
        if (x <= shape[i][0]) {
            const a = shape[i - 1];
            const b = shape[i];
            return a[1] + (b[1] - a[1]) * (x - a[0]) / (b[0] - a[0]);
        }
    }
    return shape[shape.length - 1][1];
}

let seed = 12345;
function rnd() {
    seed = (seed * 1103515 + 12345) & 0x7fffffff;
    return seed / 0x7fffffff;
}

let d = '';
for (let x = 41; x <= 1901; x += 0.5) {
    const amp = x < 1520 ? 1.5 + (x - 41) / 1480 * 0.8 : 2.3 + (x - 1520) / 381 * 2;
    const y = baseY(x) + (rnd() - 0.5) * 2 * amp;
    d += (d ? 'L' : 'M') + x + ' ' + y.toFixed(1);
}
const layer = document.getElementById('traceLayer');
const path = document.createElementNS(ns, 'path');
path.setAttribute('d', d);
path.setAttribute('fill', 'none');
path.setAttribute('stroke', '#00a651');
path.setAttribute('stroke-width', '1.2');
layer.appendChild(path);

spikes.forEach(s => {
    line(layer, s[0] + 0.5, s[1], s[0] + 0.5, baseY(s[0]), { stroke: '#00a651', 'stroke-width': 1 });
});
```
